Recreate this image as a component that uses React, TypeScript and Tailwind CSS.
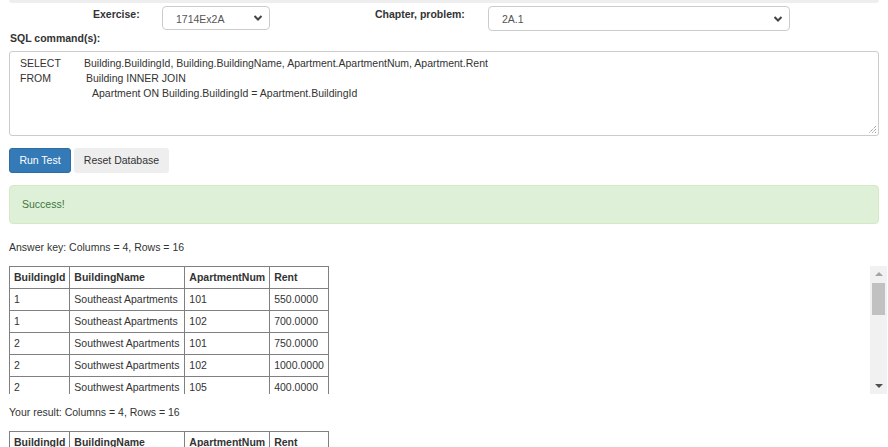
import React from "react";

const rows = [
  ["1", "Southeast Apartments", "101", "550.0000"],
  ["1", "Southeast Apartments", "102", "700.0000"],
  ["2", "Southwest Apartments", "101", "750.0000"],
  ["2", "Southwest Apartments", "102", "1000.0000"],
  ["2", "Southwest Apartments", "105", "400.0000"],
  ["3", "Northeast Apartments", "101", "800.0000"],
];

const cols = [
  { name: "BuildingId", w: "w-[60px]" },
  { name: "BuildingName", w: "w-[115px]" },
  { name: "ApartmentNum", w: "w-[84px]" },
  { name: "Rent", w: "w-[59px]" },
];

const Chevron = () => (
  <svg width="10" height="8" viewBox="0 0 10 8" className="text-[#444]">
    <path d="M1.5 2 L5 5.5 L8.5 2" fill="none" stroke="currentColor" strokeWidth="2" />
  </svg>
);

const Select: React.FC<{ value: string; className: string }> = ({ value, className }) => (
  <div
    className={`flex items-center justify-between rounded-[4px] border border-[#ccc] bg-white pl-[13px] pr-[6px] text-[#555] ${className}`}
  >
    <span className="pt-[3px]">{value}</span>
    <Chevron />
  </div>
);

const ResultTable: React.FC<{ data: string[][] }> = ({ data }) => (
  <table className="table-fixed border-collapse border border-[#808080] text-[#333]">
    <thead>
      <tr className="h-[22px]">
        {cols.map((c) => (
          <th
            key={c.name}
            className={`whitespace-nowrap border border-[#808080] px-[4px] text-left font-bold ${c.w}`}
          >
            {c.name}
          </th>
        ))}
      </tr>
    </thead>
    <tbody>
      {data.map((r, i) => (
        <tr key={i} className="h-[22px]">
          {r.map((v, j) => (
            <td key={j} className="whitespace-nowrap border border-[#808080] px-[4px]">
              {v}
            </td>
          ))}
        </tr>
      ))}
    </tbody>
  </table>
);

const App: React.FC = () => {
  return (
    <div className="h-[447px] w-[888px] overflow-hidden bg-white font-['Liberation_Sans',Arial,sans-serif] text-[10.5px] text-[#333]">
      <div className="mx-[9px] h-[3px] rounded-b-[4px] bg-[#eee]" />

      <div className="mt-[3px] flex items-start">
        <label className="ml-[93px] mt-[1px] w-[46px] whitespace-nowrap font-bold">Exercise:</label>
        <Select value="1714Ex2A" className="ml-[23px] h-[24px] w-[108px]" />
        <label className="ml-[105px] mt-[1px] w-[91px] whitespace-nowrap font-bold">Chapter, problem:</label>
        <Select value="2A.1" className="ml-[22px] h-[25px] w-[302px]" />
      </div>

      <div className="ml-[10px] mt-0 font-bold leading-[14px]">SQL command(s):</div>

      <div className="relative mx-[9px] mt-[6px] h-[85px] rounded-[3px] border border-[#ccc] pl-[10px] pt-[4px] leading-[15px]">
        <div className="flex">
          <span className="w-[64px]">SELECT</span>
          <span>Building.BuildingId, Building.BuildingName, Apartment.ApartmentNum, Apartment.Rent</span>
        </div>
        <div className="flex">
          <span className="w-[66px]">FROM</span>
          <span>Building INNER JOIN</span>
        </div>
        <div className="pl-[72px]">Apartment ON Building.BuildingId = Apartment.BuildingId</div>
        <svg width="9" height="9" viewBox="0 0 9 9" className="absolute bottom-[1px] right-[1px]">
          <path d="M8 1 L1 8 M8 4 L4 8 M8 7 L7 8" stroke="#777" strokeWidth="1" strokeDasharray="1 1" />
        </svg>
      </div>

      <div className="mx-[9px] mt-[12px] flex gap-[3px]">
        <button className="h-[25px] w-[62px] rounded-[3px] border border-[#2e6da4] bg-[#337ab7] text-white">
          Run Test
        </button>
        <button className="h-[25px] w-[95px] rounded-[3px] bg-[#eee] text-[#333]">Reset Database</button>
      </div>

      <div className="mx-[9px] mt-[12px] flex h-[39px] items-center rounded-[4px] border border-[#d6e9c6] bg-[#dff0d8] pl-[12px] text-[#3c763d]">
        Success!
      </div>

      <div className="ml-[9px] mt-[16px] leading-[14px]">Answer key: Columns = 4, Rows = 16</div>

      <div className="ml-[9px] mr-[1px] mt-[12px] flex h-[128px]">
        <div className="flex-1 overflow-hidden">
          <ResultTable data={rows} />
        </div>
        <div className="flex w-[17px] flex-col items-center bg-[#f1f1f1]">
          <div className="mt-[6px] h-0 w-0 border-x-[4px] border-b-[4px] border-x-transparent border-b-[#a3a3a3]" />
          <div className="mt-[7px] h-[32px] w-[13px] bg-[#c1c1c1]" />
          <div className="flex-1" />
          <div className="mb-[6px] h-0 w-0 border-x-[4px] border-t-[4px] border-x-transparent border-t-[#505050]" />
        </div>
      </div>

      <div className="ml-[9px] mt-[11px] leading-[14px]">Your result: Columns = 4, Rows = 16</div>

      <div className="ml-[9px] mt-[12px]">
        <ResultTable data={rows} />
      </div>
    </div>
  );
};

export default App;
